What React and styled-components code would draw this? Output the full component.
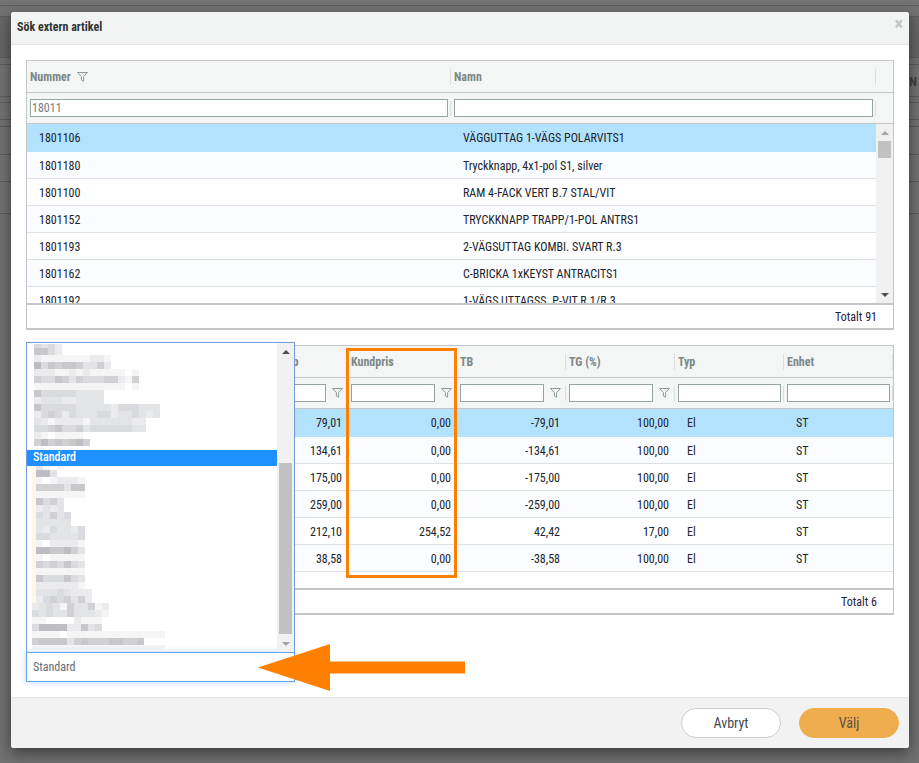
import styled, { createGlobalStyle } from "styled-components";

const FONT = `Roboto, "Liberation Sans", sans-serif`;

const topRows = [
  ["1801106", "VÄGGUTTAG 1-VÄGS POLARVITS1"],
  ["1801180", "Tryckknapp, 4x1-pol S1, silver"],
  ["1801100", "RAM 4-FACK VERT B.7 STAL/VIT"],
  ["1801152", "TRYCKKNAPP TRAPP/1-POL ANTRS1"],
  ["1801193", "2-VÄGSUTTAG KOMBI. SVART R.3"],
  ["1801162", "C-BRICKA 1xKEYST ANTRACITS1"],
  ["1801192", "1-VÄGS UTTAGSS. P-VIT R.1/R.3"],
];

const bottomRows = [
  ["79,01", "0,00", "-79,01", "100,00"],
  ["134,61", "0,00", "-134,61", "100,00"],
  ["175,00", "0,00", "-175,00", "100,00"],
  ["259,00", "0,00", "-259,00", "100,00"],
  ["212,10", "254,52", "42,42", "17,00"],
  ["38,58", "0,00", "-38,58", "100,00"],
];

const TOP_COLS = "424px 425px 17px";
const BOTTOM_COLS = "212px 109px 109px 109px 109px 109px 109px";

// pixelated (censored) list entries: y offset, height, x, cell shades
const smudgeTop = [
  [1, 4, 7, "4342"],
  [5, 7, 7, "6642"],
  [12, 7, 7, "21111111221"],
  [19, 7, 7, "74656653352"],
  [26, 7, 7, "222112121111101"],
  [33, 7, 7, "544653544455215"],
  [40, 7, 7, "111111111111101"],
  [47, 7, 7, "6444443333"],
  [54, 7, 7, "2333223333"],
  [61, 7, 7, "644444333332444333"],
  [68, 7, 7, "245424333442334323"],
  [75, 7, 7, "3212222133333322"],
  [82, 7, 7, "4456445344444433"],
  [89, 7, 7, "2101111"],
  [96, 7, 7, "57565675"],
];

const smudgeBottom = [
  [0, 4, 5, "w3101"],
  [4, 7, 5, "w773"],
  [11, 7, 5, "w1012221"],
  [18, 7, 5, "w5555366"],
  [25, 7, 5, "w1111111"],
  [32, 7, 5, "w64530"],
  [39, 7, 5, "w23230"],
  [46, 7, 5, "w43534"],
  [53, 7, 5, "w33333"],
  [60, 7, 5, "w3243324"],
  [67, 7, 5, "w4433334"],
  [74, 7, 5, "w1022221"],
  [81, 7, 5, "w7766753"],
  [88, 7, 5, "w1011111"],
  [95, 7, 5, "w5454643"],
  [102, 7, 5, "w1111111"],
  [109, 7, 5, "w6444643"],
  [116, 7, 5, "w2222221"],
  [123, 7, 5, "w33343222"],
  [130, 7, 5, "w24545352"],
  [137, 7, 5, "23431533512"],
  [144, 7, 5, "43433533321"],
  [151, 7, 5, "1100002111"],
  [158, 7, 5, "4777722634"],
  [165, 7, 5, "1111011111111111111"],
  [172, 7, 5, "5666635655566556"],
  [179, 4, 5, "1111111111111111111"],
];

const SHADES = ["#ffffff", "#f5f5f6", "#ebebed", "#e3e4e6", "#dadbde", "#d1d1d4", "#c8c8cc", "#bdbdc3"];

const Global = createGlobalStyle`
  html, body { margin: 0; padding: 0; height: 100%; }
  body { font-family: ${FONT}; font-stretch: 75%; background: #727272; overflow: hidden; }
  * { box-sizing: border-box; }
`;

const Backdrop = styled.div`
  height: 763px;
  background: #727272;
  display: flex;
  flex-direction: column;
`;
const BackdropRow = styled.div`
  height: ${({ $h }) => $h}px;
  flex: none;
  border-bottom: 1px solid #5c5c5c;
  background: ${({ $bg }) => $bg || "#737373"};
  padding: ${({ $text }) => ($text ? "9px 2px 0 0" : 0)};
  font-size: 13px;
  font-weight: 700;
  color: #3f3f3f;
  text-align: right;
`;

const Modal = styled.div`
  position: absolute;
  left: 11px;
  top: 12px;
  width: 898px;
  height: 736px;
  background: #fff;
  border-radius: 3px;
  box-shadow: 0 5px 15px rgba(0, 0, 0, 0.5);
  display: flex;
  flex-direction: column;
`;
const ModalHead = styled.div`
  height: 33px;
  flex: none;
  padding: 0 6px 2px;
  display: flex;
  align-items: center;
  justify-content: space-between;
  background: #f2f3f3;
  border-bottom: 1px solid #e5e5e5;
  border-radius: 3px 3px 0 0;
`;
const ModalTitle = styled.div`
  font-size: 12px;
  font-weight: 700;
  color: #333;
`;
const Close = styled.div`
  font-size: 18px;
  font-weight: 700;
  line-height: 18px;
  color: #c4c4c4;
  margin: -6px 0 0;
`;
const ModalBody = styled.div`
  position: relative;
  flex: 1;
  padding: 15px 15px 0;
  display: flex;
  flex-direction: column;
  gap: 15px;
`;
const ModalFoot = styled.div`
  height: 51px;
  flex: none;
  padding: 10px 10px 0 0;
  display: flex;
  justify-content: flex-end;
  gap: 18px;
  background: #f2f2f2;
  border-top: 1px solid #e5e5e5;
  border-radius: 0 0 3px 3px;
`;
const Button = styled.button`
  width: 100px;
  height: 30px;
  border-radius: 15px;
  font-family: ${FONT};
  font-stretch: 75%;
  font-size: 14px;
  color: ${({ $primary }) => ($primary ? "#5a5040" : "#444b55")};
  background: ${({ $primary }) => ($primary ? "#f0ad4e" : "#fff")};
  border: 1px solid ${({ $primary }) => ($primary ? "#f0ad4e" : "#ccc")};
`;

const Grid = styled.div`
  height: 270px;
  width: 868px;
  flex: none;
  border: 1px solid #c3c7ca;
  border-bottom-width: 2px;
  display: flex;
  flex-direction: column;
`;
const Cols = styled.div`
  display: grid;
  grid-template-columns: ${({ $cols }) => $cols};
`;
const HeadRow = styled(Cols)`
  height: 32px;
  flex: none;
  background: #f4f5f5;
  border-bottom: 1px solid #c3c9cb;
`;
const FilterRow = styled(Cols)`
  height: 31px;
  flex: none;
  background: #f4f5f5;
  border-bottom: 1px solid #c3c7ca;
`;
const HeadCell = styled.div`
  position: relative;
  display: flex;
  align-items: center;
  gap: 6px;
  padding-left: 3px;
  font-size: 12px;
  font-weight: 700;
  color: #7d8888;
  white-space: nowrap;
  &::after {
    content: "";
    position: absolute;
    right: 0;
    top: 8px;
    bottom: 7px;
    width: 1px;
    background: #dcdfe0;
  }
`;
const HeadEnd = styled.div`
  background: #f4f5f5;
`;
const FilterCell = styled(HeadCell)`
  padding-right: ${({ $filter }) => ($filter ? 0 : 3)}px;
  gap: 0;
`;
const FilterInput = styled.input`
  flex: 1;
  min-width: 0;
  width: 0;
  height: 18px;
  padding: 0 1px;
  border: 1px solid #97a4a4;
  background: #fff;
  font-family: ${FONT};
  font-stretch: 75%;
  font-size: 12px;
  color: #7d7d7d;
  outline: none;
`;
const FunnelBox = styled.div`
  width: 22px;
  flex: none;
  display: flex;
  justify-content: center;
`;
const Main = styled.div`
  flex: 1;
  display: flex;
  min-height: 0;
  overflow: hidden;
`;
const Rows = styled.div`
  flex: 1;
  min-width: 0;
  overflow: hidden;
`;
const Row = styled(Cols)`
  height: ${({ $selected }) => ($selected ? 28 : 27)}px;
  padding-top: ${({ $selected }) => ($selected ? 0 : 1)}px;
  align-items: center;
  border-bottom: 1px solid #dde0e4;
  background: ${({ $selected, $odd }) => ($selected ? "#b3e2fe" : $odd ? "#fbfcff" : "#fff")};
  ${({ $selected }) => $selected && "border-bottom-color: #b3e2fe;"}
`;
const Cell = styled.div`
  padding: 0 6px 0 12px;
  font-size: 12px;
  color: #20242c;
  white-space: nowrap;
  text-align: ${({ $right }) => ($right ? "right" : "left")};
`;
const Scrollbar = styled.div`
  width: 17px;
  flex: none;
  background: #f1f1f1;
  display: flex;
  flex-direction: column;
  align-items: center;
  justify-content: space-between;
  position: relative;
`;
const Arrow = styled.div`
  width: 17px;
  height: 17px;
  flex: none;
  display: flex;
  align-items: center;
  justify-content: center;
  &::before {
    content: "";
    border-left: 4px solid transparent;
    border-right: 4px solid transparent;
    ${({ $down, $color }) =>
      $down ? `border-top: 4px solid ${$color};` : `border-bottom: 4px solid ${$color};`}
  }
`;
const Thumb = styled.div`
  position: absolute;
  left: 2px;
  width: 13px;
  top: ${({ $top }) => $top}px;
  height: ${({ $h }) => $h}px;
  background: #c1c1c1;
`;
const GridFoot = styled.div`
  height: 25px;
  flex: none;
  border-top: 2px solid #c3c7ca;
  padding-right: 16px;
  display: flex;
  align-items: center;
  justify-content: flex-end;
  font-size: 12px;
  color: #1d2140;
`;

const Dropdown = styled.div`
  position: absolute;
  left: 15px;
  top: 297px;
  width: 269px;
  z-index: 2;
  display: flex;
  flex-direction: column;
`;
const ListBox = styled.div`
  height: 311px;
  border: 1px solid #6f9bdc;
  background: #fff;
  display: flex;
`;
const ListItems = styled.div`
  flex: 1;
  min-width: 0;
`;
const SmudgeSvg = styled.svg`
  display: block;
`;
const ListItem = styled.div`
  height: 16px;
  margin-top: 2px;
  padding-left: 6px;
  line-height: 15px;
  font-size: 12px;
  font-weight: 500;
  color: #fff;
  background: #1e90ff;
`;
const SelectInput = styled.div`
  height: 30px;
  margin-top: -1px;
  padding-left: 6px;
  display: flex;
  align-items: center;
  font-size: 12px;
  color: #666c75;
  background: #fff;
  border: 1px solid #64a6ee;
  box-shadow: 0 0 6px rgba(100, 166, 238, 0.45);
`;
const Highlight = styled.div`
  position: absolute;
  left: 335px;
  top: 303px;
  width: 111px;
  height: 230px;
  border: 3px solid #ff8000;
  z-index: 3;
`;
const BigArrow = styled.svg`
  position: absolute;
  left: 247px;
  top: 599px;
  z-index: 3;
`;

const Funnel = () => (
  <svg width="11" height="10" viewBox="0 0 11 10">
    <path d="M.5.5h10L6.6 4.6v4.6L4.4 8V4.6z" fill="#f4f5f5" stroke="#8f9c9f" strokeWidth="1" />
  </svg>
);

const Smudge = ({ rows, height }) => (
  <SmudgeSvg width="250" height={height}>
    {rows.map(([y, h, x, cells]) =>
      [...cells].map((c, i) => {
        if (c === "w") return <rect key={`${y}-${i}`} x={x} y={y} width={4} height={h} fill="#fdf6ec" />;
        const warm = cells[0] === "w";
        const left = warm ? x + 4 + (i - 1) * 7 : x + i * 7;
        return <rect key={`${y}-${i}`} x={left} y={y} width={7} height={h} fill={SHADES[Number(c)]} />;
      })
    )}
  </SmudgeSvg>
);

const Filter = () => (
  <FilterCell $filter>
    <FilterInput />
    <FunnelBox>
      <Funnel />
    </FunnelBox>
  </FilterCell>
);

export default function App() {
  return (
    <>
      <Global />
      <Backdrop>
        <BackdropRow $h={6} />
        <BackdropRow $h={11} />
        <BackdropRow $h={41} $bg="#666666" />
        <BackdropRow $h={7} />
        <BackdropRow $h={32} $text>
          AN
        </BackdropRow>
        <BackdropRow $h={6} />
        <BackdropRow $h={17} />
        <BackdropRow $h={7} />
        <BackdropRow $h={28} />
        <BackdropRow $h={27} />
        <BackdropRow $h={32} />
      </Backdrop>
      <Modal>
        <ModalHead>
          <ModalTitle>Sök extern artikel</ModalTitle>
          <Close>×</Close>
        </ModalHead>
        <ModalBody>
          <Grid>
            <HeadRow $cols={TOP_COLS}>
              <HeadCell>
                Nummer
                <Funnel />
              </HeadCell>
              <HeadCell>Namn</HeadCell>
              <HeadEnd />
            </HeadRow>
            <FilterRow $cols={TOP_COLS}>
              <FilterCell>
                <FilterInput defaultValue="18011" />
              </FilterCell>
              <FilterCell>
                <FilterInput />
              </FilterCell>
              <HeadEnd />
            </FilterRow>
            <Main>
              <Rows>
                {topRows.map(([num, name], i) => (
                  <Row key={num} $cols="424px 425px" $selected={i === 0} $odd={i % 2 === 1}>
                    <Cell>{num}</Cell>
                    <Cell>{name}</Cell>
                  </Row>
                ))}
              </Rows>
              <Scrollbar>
                <Arrow $color="#a3a3a3" />
                <Thumb $top={17} $h={17} />
                <Arrow $down $color="#505050" />
              </Scrollbar>
            </Main>
            <GridFoot>Totalt 91</GridFoot>
          </Grid>

          <Grid>
            <HeadRow $cols={BOTTOM_COLS}>
              <HeadCell />
              <HeadCell>Bruttoinköp</HeadCell>
              <HeadCell>Kundpris</HeadCell>
              <HeadCell>TB</HeadCell>
              <HeadCell>TG (%)</HeadCell>
              <HeadCell>Typ</HeadCell>
              <HeadCell>Enhet</HeadCell>
            </HeadRow>
            <FilterRow $cols={BOTTOM_COLS}>
              <HeadCell />
              <Filter />
              <Filter />
              <Filter />
              <Filter />
              <FilterCell>
                <FilterInput />
              </FilterCell>
              <FilterCell>
                <FilterInput />
              </FilterCell>
            </FilterRow>
            <Main>
              <Rows>
                {bottomRows.map((row, i) => (
                  <Row key={i} $cols={BOTTOM_COLS} $selected={i === 0} $odd={i % 2 === 1}>
                    <Cell />
                    {row.map((v, j) => (
                      <Cell key={j} $right>
                        {v}
                      </Cell>
                    ))}
                    <Cell>El</Cell>
                    <Cell>ST</Cell>
                  </Row>
                ))}
              </Rows>
            </Main>
            <GridFoot>Totalt 6</GridFoot>
          </Grid>

          <Dropdown>
            <ListBox>
              <ListItems>
                <Smudge rows={smudgeTop} height={105} />
                <ListItem>Standard</ListItem>
                <Smudge rows={smudgeBottom} height={184} />
              </ListItems>
              <Scrollbar>
                <Arrow $color="#505050" />
                <Thumb $top={120} $h={171} />
                <Arrow $down $color="#a3a3a3" />
              </Scrollbar>
            </ListBox>
            <SelectInput>Standard</SelectInput>
          </Dropdown>

          <Highlight />
          <BigArrow width="208" height="48" viewBox="0 0 208 48">
            <path d="M0 23.5 72 0v17.5h135v12H72V47z" fill="#ff8000" />
          </BigArrow>
        </ModalBody>
        <ModalFoot>
          <Button>Avbryt</Button>
          <Button $primary>Välj</Button>
        </ModalFoot>
      </Modal>
    </>
  );
}
